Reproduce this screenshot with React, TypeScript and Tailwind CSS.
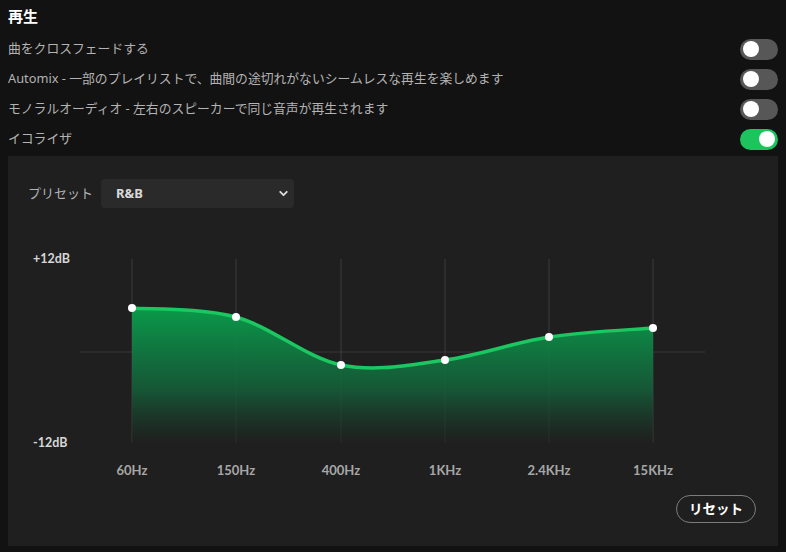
import { ChevronDown } from "lucide-react";

const rows = [
  { label: "曲をクロスフェードする", on: false },
  { label: "Automix - 一部のプレイリストで、曲間の途切れがないシームレスな再生を楽しめます", on: false },
  { label: "モノラルオーディオ - 左右のスピーカーで同じ音声が再生されます", on: false },
  { label: "イコライザ", on: true },
];

const bands = [
  { hz: "60Hz", x: 124, y: 68 },
  { hz: "150Hz", x: 228, y: 77 },
  { hz: "400Hz", x: 333, y: 125 },
  { hz: "1KHz", x: 437, y: 120 },
  { hz: "2.4KHz", x: 541, y: 97 },
  { hz: "15KHz", x: 645, y: 88 },
];

const TOP = 19;
const BOTTOM = 203;

// catmull-rom -> cubic bezier
const curvePath = () => {
  const p = bands;
  let d = `M${p[0].x},${p[0].y}`;
  for (let i = 0; i < p.length - 1; i++) {
    const a = p[i - 1] ?? p[i];
    const b = p[i];
    const c = p[i + 1];
    const e = p[i + 2] ?? c;
    const c1x = b.x + (c.x - a.x) / 6;
    const c1y = b.y + (c.y - a.y) / 6;
    const c2x = c.x - (e.x - b.x) / 6;
    const c2y = c.y - (e.y - b.y) / 6;
    d += ` C${c1x},${c1y} ${c2x},${c2y} ${c.x},${c.y}`;
  }
  return d;
};

const Toggle = ({ on }: { on: boolean }) => (
  <div
    className={`flex h-[21px] w-[38px] items-center rounded-full px-[3px] ${
      on ? "justify-end bg-[#1bc45c]" : "justify-start bg-[#575757]"
    }`}
  >
    <div className="size-[16px] rounded-full bg-white" />
  </div>
);

const Chart = () => {
  const line = curvePath();
  const last = bands[bands.length - 1];
  const area = `${line} L${last.x},${BOTTOM} L${bands[0].x},${BOTTOM} Z`;
  return (
    <svg width="770" height="250" className="mt-[32px] block" style={{ fontFamily: "Lato, 'Liberation Sans', sans-serif" }}>
      <defs>
        <linearGradient id="eqfill" x1="0" y1="0" x2="0" y2="1">
          <stop offset="0%" stopColor="#0a9a4a" stopOpacity="1" />
          <stop offset="60%" stopColor="#14613a" stopOpacity="0.85" />
          <stop offset="100%" stopColor="#1f1f1f" stopOpacity="0.6" />
        </linearGradient>
      </defs>
      <line x1="72" x2="697" y1="112" y2="112" stroke="#383838" strokeWidth="1" />
      {bands.map((b) => (
        <line key={b.hz} x1={b.x} x2={b.x} y1={TOP} y2={BOTTOM} stroke="#3c3c3c" strokeWidth="1" />
      ))}
      <path d={area} fill="url(#eqfill)" />
      <path d={line} fill="none" stroke="#1bc760" strokeWidth="3.5" strokeLinecap="round" />
      {bands.map((b) => (
        <circle key={b.hz + "dot"} cx={b.x} cy={b.y} r="4" fill="#ffffff" />
      ))}
      <text x="25" y="23" fill="#d6d6d6" fontSize="12.5" fontWeight="700">
        +12dB
      </text>
      <text x="25" y="207" fill="#d6d6d6" fontSize="12.5" fontWeight="700">
        -12dB
      </text>
      {bands.map((b) => (
        <text key={b.hz + "t"} x={b.x} y="235" textAnchor="middle" fill="#a7a7a7" fontSize="13" fontWeight="700">
          {b.hz}
        </text>
      ))}
    </svg>
  );
};

const App = () => {
  return (
    <div
      className="h-[552px] w-[786px] bg-[#121212] px-2"
      style={{ fontFamily: "'Noto Sans', 'Noto Sans CJK JP', sans-serif" }}
    >
      <div className="flex h-[34px] items-center pb-[2px] text-[15px] font-bold text-white">再生</div>
      {rows.map((r) => (
        <div key={r.label} className="flex h-[30px] items-center justify-between text-[12.8px] text-[#b3b3b3]">
          <span>{r.label}</span>
          <Toggle on={r.on} />
        </div>
      ))}
      <div className="mt-[2px] flex flex-col bg-[#1f1f1f] pb-[23px]">
        <div className="flex items-center gap-2 px-5 pt-[23px]">
          <span className="text-[13px] text-[#b3b3b3]">プリセット</span>
          <div className="flex h-[29px] w-[193px] items-center justify-between rounded bg-[#2a2a2a] pl-[15px] pr-[4px] text-[13px] font-bold text-[#d9d9d9]">
            <span>R&amp;B</span>
            <ChevronDown size={13} strokeWidth={3.5} className="text-[#d9d9d9]" />
          </div>
        </div>
        <Chart />
        <div className="mt-[5px] flex justify-end pr-[22px]">
          <button className="flex h-[28px] w-[80px] items-center justify-center rounded-full border border-[#7c7c7c] text-[13.5px] font-bold text-white">
            リセット
          </button>
        </div>
      </div>
    </div>
  );
};

export default App;
